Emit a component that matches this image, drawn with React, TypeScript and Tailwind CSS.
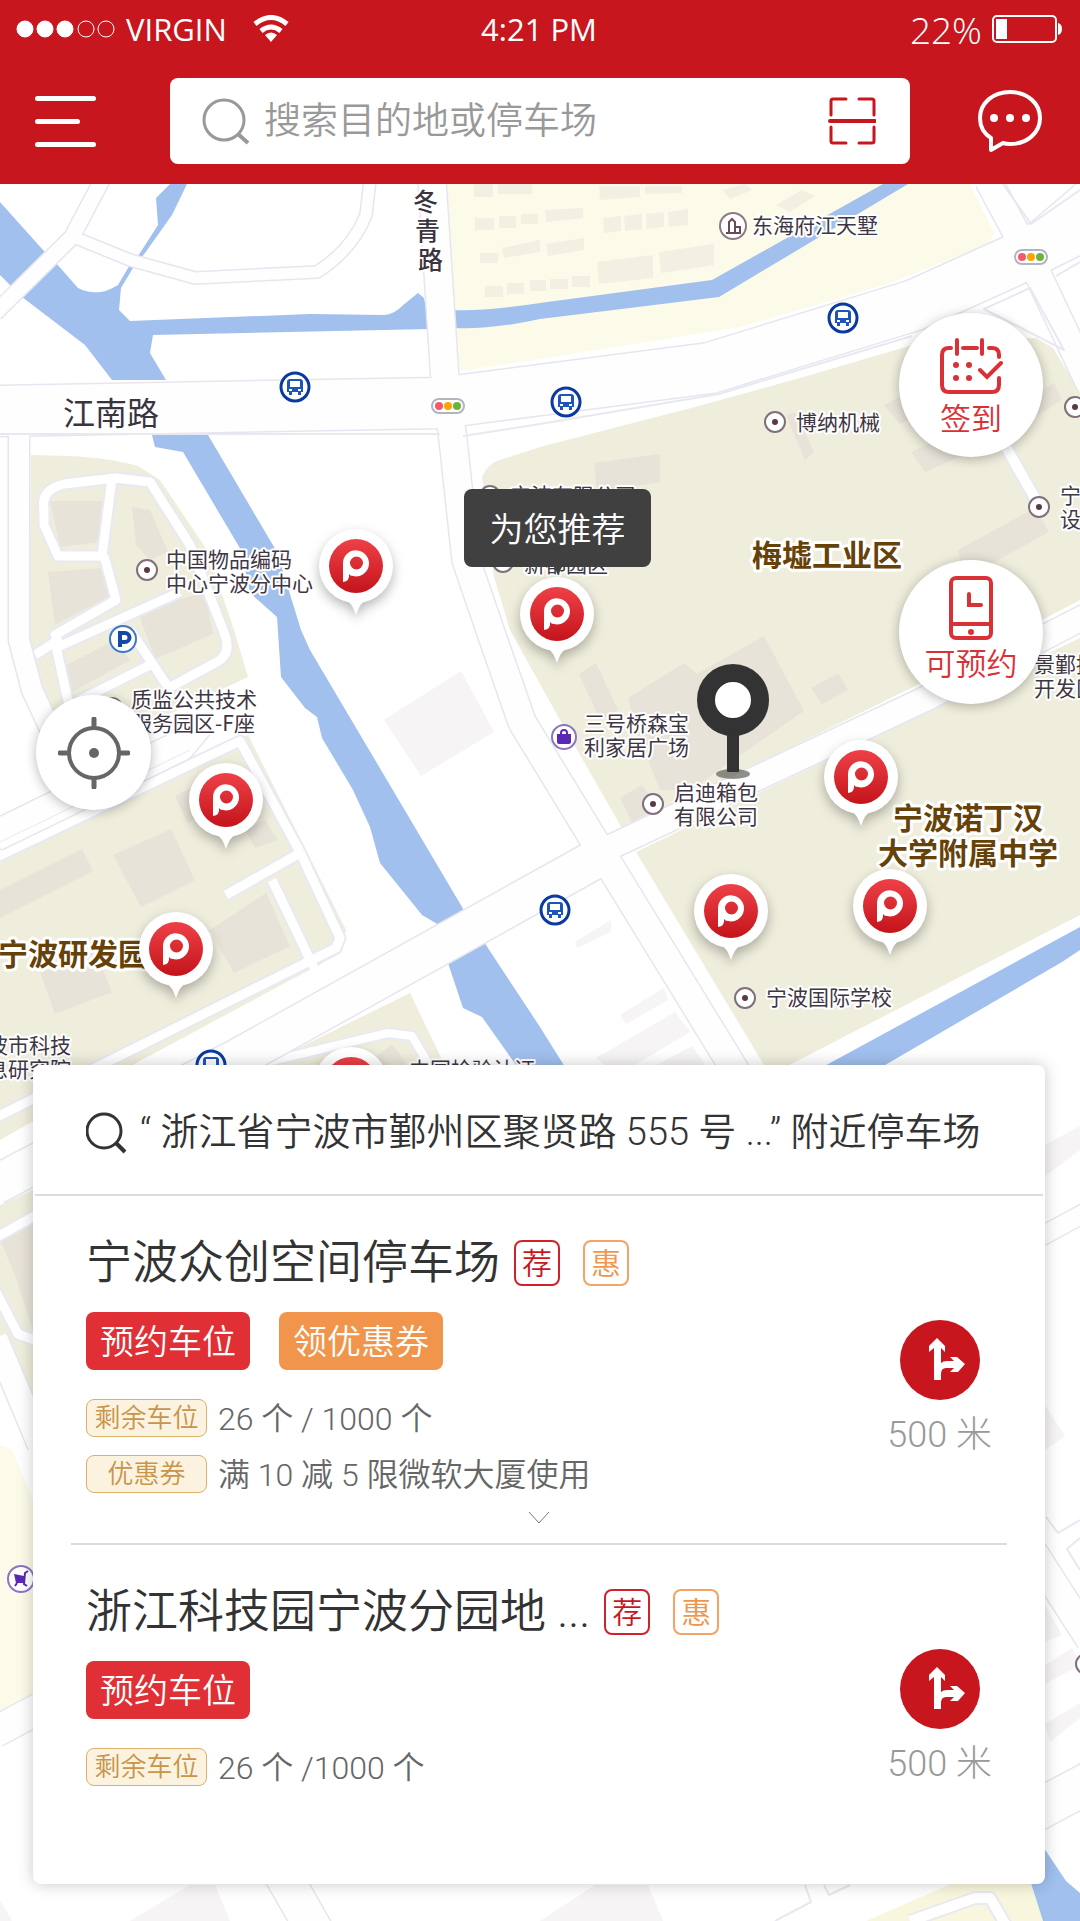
import React from "react";

type Point = { x: number; y: number };

const dots: Point[] = [
  { x: 147, y: 570 },
  { x: 775, y: 422 },
  { x: 653, y: 804 },
  { x: 745, y: 998 },
  { x: 1039, y: 507 },
  { x: 1075, y: 407 },
  { x: 1086, y: 1664 },
  { x: 112, y: 708 },
  { x: 490, y: 496 },
  { x: 503, y: 562 },
];

const buses: Point[] = [
  { x: 295, y: 387 },
  { x: 566, y: 402 },
  { x: 843, y: 318 },
  { x: 555, y: 910 },
  { x: 211, y: 1065 },
];

const lights: Point[] = [
  { x: 448, y: 406 },
  { x: 1031, y: 257 },
];

const placeLabels: [string, number, number][] = [
  ["东海府江天墅", 752, 233],
  ["博纳机械", 796, 430],
  ["中国物品编码", 166, 567],
  ["中心宁波分中心", 166, 591],
  ["质监公共技术", 131, 707],
  ["服务园区-F座", 131, 731],
  ["三号桥森宝", 584, 731],
  ["利家居广场", 584, 755],
  ["启迪箱包", 674, 800],
  ["有限公司", 674, 824],
  ["宁波国际学校", 766, 1005],
  ["宁波有限公司", 510, 503],
  ["新都园区", 524, 572],
  ["宁波", 1060, 503],
  ["设计", 1060, 527],
  ["景鄞招", 1034, 672],
  ["开发区", 1034, 696],
  ["宁波市科技", -34, 1053],
  ["信息研究院", -34, 1077],
  ["中国检验认证", 409, 1077],
];

const areaLabels: [string, number, number][] = [
  ["梅墟工业区", 752, 566],
  ["宁波诺丁汉", 893, 829],
  ["大学附属中学", 878, 864],
  ["宁波研发园", -2, 965],
];

const roads: { d: string; w: number }[] = [
  { d: "M-5 313L72 237L102 180", w: 15 },
  { d: "M76 238L130 260L195 278L317 272Q352 250 366 215L370 180", w: 11 },
  { d: "M19 420V640L32 690L60 750", w: 20 },
  { d: "M-5 836L180 746L200 722", w: 30 },
  { d: "M988 180L1032 262L1090 385", w: 26 },
  { d: "M1020 250L1090 190", w: 26 },
  { d: "M600 852L923 700L1090 614", w: 24 },
  { d: "M-5 1185L238 1058L540 890L612 850", w: 38 },
  { d: "M432 180L445 380L453 440L466 560L490 630L522 722L600 850L735 1070L1000 1500L1090 1640", w: 27 },
  { d: "M-5 411L440 403L540 390L710 368L915 305L1010 262L1090 222", w: 50 },
  { d: "M-5 1732L40 1708", w: 30 },
  { d: "M-5 1338L40 1445", w: 24 },
  { d: "M280 1870L320 1940", w: 36 },
  { d: "M1030 1814L1090 1782", w: 40 },
  { d: "M1040 1237L1090 1210", w: 18 },
];

const lanes: { d: string; w: number }[] = [
  { d: "M44 510Q40 490 64 484L115 478L150 482L190 545L225 635Q232 655 215 663L165 690", w: 9 },
  { d: "M44 506L44 525L58 556L102 556L112 478", w: 9 },
  { d: "M104 556L116 600L55 635L60 646L180 592", w: 9 },
  { d: "M35 655L55 642L70 710", w: 9 },
  { d: "M130 630L170 690M80 700L150 665", w: 9 },
  { d: "M-5 858L240 741L300 852L340 938L336 948L-5 1118", w: 9 },
  { d: "M302 852L226 895M272 880L314 968", w: 9 },
  { d: "M250 1066L388 1033L412 1036L432 1070", w: 8 },
  { d: "M40 1213L-5 1238M-5 1290L18 1334L40 1342", w: 9 },
  { d: "M1002 440L1036 500", w: 10 },
  { d: "M910 1921L975 1898L990 1898L1006 1925", w: 10 },
];

const water: string[] = [
  "M0 202L43 250L56 263L78 288Q98 298 118 285L128 268L140 253L158 225L156 198L170 184H187L172 215L145 253L133 268L121 288L119 310L130 321L310 314L385 315Q396 313 402 306L418 293L424 298L430 329L153 335L150 353L166 380H112L85 345L22 297L0 275Z",
  "M451 310Q480 312 540 303L712 280L833 212L883 184H908L719 297L540 319Q490 330 453 328Z",
  "M152 435H208L277 552L301 630L310 650L465 912L484 942L540 1027L570 1075H523L482 1017L463 1008L448 963L439 925L422 915L380 863L370 827L353 790L322 738L317 717L305 708L281 677L277 617L250 593L241 550L183 452L155 447Z",
  "M808 1075L1080 927V950L1062 962L868 1075Z",
  "M1030 1880L1044 1848L1066 1881L1080 1893V1921H1043Z",
];

const greyBlocks: string[] = [
  "M50 501H102L99 542L60 547Z",
  "M132 507L150 510L168 552L150 560L136 545Z",
  "M48 572L104 568L110 596L55 625Z",
  "M138 612L205 592L213 634L155 659Z",
  "M57 670L115 640L130 660L72 692Z",
  "M175 796L212 778L220 800L188 824Z",
  "M113 855L171 829L195 880L141 907Z",
  "M0 890L82 849L93 871L0 918Z",
  "M210 930L266 893L290 946L234 973Z",
  "M36 960L90 940L112 992L55 1014Z",
  "M245 830L265 820L278 840L255 848Z",
  "M594 463L660 454V482L597 492Z",
  "M786 415L795 412L814 452L805 460Z",
  "M884 405L930 382L940 402L900 424Z",
  "M911 452L960 430L975 450L925 472Z",
  "M1035 395L1054 383L1062 400L1038 415Z",
  "M958 550L1035 508L1049 532L980 570H962Z",
  "M579 674L596 663L618 710L600 720Z",
  "M628 698L684 663L697 674L764 636L804 711L690 790L660 790L640 740Z",
  "M811 688L838 673L848 690L822 704Z",
  "M620 798L642 785L658 808L632 822Z",
  "M365 1066L392 1044L405 1062V1066Z",
  "M0 1240L33 1222V1330L15 1275Z",
];

const faintBlocks: string[] = [
  "M384 720L461 671L494 732L421 776Z",
  "M575 942L611 920V932L577 948Z",
  "M620 1015L664 988L668 1000L626 1024Z",
  "M596 1058L675 1012L690 1032L618 1075Z",
  "M655 1066L692 1046L706 1066Z",
  "M1045 1145L1080 1126V1150L1045 1176Z",
  "M1045 1405L1065 1436L1045 1450Z",
  "M1045 1605L1062 1635L1045 1642Z",
  "M1045 1665L1072 1648L1080 1665L1045 1684Z",
  "M1045 1724L1080 1703V1718L1050 1742Z",
  "M130 1921L190 1885H215L230 1921Z",
  "M540 1921L595 1885H648L663 1921Z",
  "M0 1900L12 1921H0Z",
];

const yellowBlocks: string[] = [
  "M474 184H493V197H474ZM498 184H532V194H498Z",
  "M475 218H494V230H475ZM499 216H516V228H499ZM521 214H538V224H521Z",
  "M480 253H498V263H480ZM502 248L540 240V252L504 258Z",
  "M485 286H503V297H485ZM507 283H524V294H507ZM530 280H546V291H530Z",
  "M546 244L584 238V250L548 256Z",
  "M545 210L583 208V218L546 222Z",
  "M599 186H640V197L600 200ZM645 186H682V193L645 194Z",
  "M603 218L621 216V231L604 233ZM624 216L642 214V229L625 231ZM646 214L664 212V227L647 229ZM668 212L688 209V225L669 227Z",
  "M597 262L653 255V278L599 284ZM659 252L714 244V265L661 273Z",
  "M550 279H568V289H550ZM572 276H590V287H572Z",
  "M722 190L745 184L752 190L730 199ZM776 205L802 190L815 196L790 212Z",
];

function CityMap() {
  return (
    <svg
      aria-label="地图"
      className="absolute inset-0 h-full w-full"
      viewBox="0 184 1080 1737"
      preserveAspectRatio="xMinYMin slice"
    >
      <rect x="0" y="184" width="1080" height="1737" fill="#fff" />
      <g fill="#fcfae8">
        <path d="M444 184L453 310L460 371L540 359L740 327L884 285L988 245L994 233L970 184Z" />
        <path d="M0 1445L12 1450L33 1500V1700L0 1718Z" />
        <path d="M866 1921L960 1880H1030L1043 1921Z" fill="#f8f6dc" />
      </g>
      <g fill="#efeddc">
        <path d="M31 455L69 456Q110 458 138 466L160 480L207 550L234 630L248 677L75 758L40 700L29 650Z" />
        <path d="M0 850L248 735L306 850L346 930L341 953L138 1062L0 1140Z" />
        <path d="M258 1068L410 993L446 1068Z" />
        <path d="M0 1205L33 1190V1415L0 1340Z" />
        <path d="M482 477Q488 463 500 460L540 447L695 407L800 378L919 343L1036 338L1053 348L1080 392V600L919 684L623 830L560 720L510 630L494 577Z" />
        <path d="M636 852L1080 638V915L770 1075Z" />
      </g>
      <g fill="#f3f0e3">
        {yellowBlocks.map((d) => (
          <path key={d} d={d} />
        ))}
      </g>
      <g fill="#e7e3d8">
        {greyBlocks.map((d) => (
          <path key={d} d={d} />
        ))}
      </g>
      <g fill="#f7f4f5">
        {faintBlocks.map((d) => (
          <path key={d} d={d} />
        ))}
      </g>
      <g fill="#a1c0ee">
        {water.map((d) => (
          <path key={d} d={d} />
        ))}
      </g>
      <g fill="none" strokeLinejoin="round">
        {lanes.map((r) => (
          <path key={r.d} d={r.d} stroke="#e9e9f3" strokeWidth={r.w + 4} />
        ))}
        {lanes.map((r) => (
          <path key={r.d} d={r.d} stroke="#fff" strokeWidth={r.w} />
        ))}
        {roads.map((r) => (
          <path key={r.d} d={r.d} stroke="#e6e6f0" strokeWidth={r.w + 3} />
        ))}
        {roads.map((r) => (
          <path key={r.d} d={r.d} stroke="#fefefe" strokeWidth={r.w} />
        ))}
        <g stroke="#e8e8f0" strokeWidth="2">
          <path d="M0 434H440M463 436L540 424L719 394L912 336" />
          <path d="M984 309L1030 288L1064 350ZM1056 276L1080 262M1003 184L1031 224L1080 190" />
          <path d="M1046 1517L1058 1533L1080 1520M1080 1538L1067 1549L1080 1570M805 1885L811 1902L775 1921M824 1885L829 1895L850 1885" />
          <path d="M0 842L190 750" strokeWidth="1" />
        </g>
      </g>

      <g fontFamily="'Noto Sans CJK SC', sans-serif" paintOrder="stroke" stroke="#fff" strokeLinejoin="round">
        <g fill="#3f3644" fontSize="21" fontWeight="400" strokeWidth="4">
          {placeLabels.map(([text, x, y]) => (
            <text key={text + y} x={x} y={y}>
              {text}
            </text>
          ))}
        </g>
        <g fill="#664208" fontSize="30" fontWeight="700" strokeWidth="6">
          {areaLabels.map(([text, x, y]) => (
            <text key={text} x={x} y={y}>
              {text}
            </text>
          ))}
        </g>
        <g fill="#3a3440">
          <text x="63" y="425" fontSize="32" strokeWidth="4">
            江南路
          </text>
          <g fontSize="25" strokeWidth="4" fontWeight="500">
            <text x="413" y="211">
              冬
            </text>
            <text x="415" y="240">
              青
            </text>
            <text x="418" y="269">
              路
            </text>
          </g>
        </g>
      </g>

      {dots.map((p) => (
        <g key={`${p.x}-${p.y}`}>
          <circle cx={p.x} cy={p.y} r="10" fill="#fff" stroke="#806f7c" strokeWidth="2" />
          <circle cx={p.x} cy={p.y} r="3" fill="#5a3a48" />
        </g>
      ))}
      {buses.map((p) => (
        <g key={`${p.x}-${p.y}`} transform={`translate(${p.x} ${p.y})`}>
          <circle r="14" fill="#fff" stroke="#0b3a9f" strokeWidth="3" />
          <path
            fill="#1d55bd"
            fillRule="evenodd"
            d="M-5 -8H5Q8 -8 8 -5V5H6V8H3V5H-3V8H-6V5H-8V-5Q-8 -8 -5 -8ZM-5 -6V0H5V-6ZM-6 2V4H-3V2ZM3 2V4H6V2Z"
          />
        </g>
      ))}
      {lights.map((p) => (
        <g key={`${p.x}-${p.y}`} transform={`translate(${p.x} ${p.y})`}>
          <rect x="-16" y="-7" width="32" height="14" rx="7" fill="#fff" stroke="#b4b4c0" strokeWidth="2" />
          <circle cx="-9" r="4" fill="#f4586c" />
          <circle r="4" fill="#fca400" />
          <circle cx="9" r="4" fill="#6cb43c" />
        </g>
      ))}
      <g transform="translate(123 639)">
        <circle r="13" fill="#fff" stroke="#3a78c8" strokeWidth="2" />
        <path d="M-3 8V-6H2A4 4 0 0 1 2 3H-3" fill="none" stroke="#1348a8" strokeWidth="4" />
      </g>
      <g transform="translate(733 226)">
        <circle r="13" fill="#fff" stroke="#8a7a86" strokeWidth="2" />
        <path d="M-7 7H7V1H2M-4 7V-4L-1 -7L2 -4V7" fill="none" stroke="#6a4a58" strokeWidth="2" />
      </g>
      <g transform="translate(564 737)">
        <circle r="12" fill="#fff" stroke="#8a74c4" strokeWidth="2" />
        <path d="M-7 -3H7V5Q7 7 5 7H-5Q-7 7 -7 5Z" fill="#5a28b4" />
        <path d="M-3 -2V-4Q-3 -7 0 -7T3 -4V-2" fill="none" stroke="#5a28b4" strokeWidth="2" />
      </g>
      <g transform="translate(21 1579)">
        <circle r="13" fill="#fff" stroke="#8a74c4" strokeWidth="2" />
        <path d="M-7 -5L-5 4H3V-3Z" fill="#5a28b4" />
        <path d="M7 -8L4 -6L3 5L6 7M-6 7L-4 4" fill="none" stroke="#5a28b4" strokeWidth="2" />
      </g>

      <g>
        <ellipse cx="733" cy="774" rx="17" ry="5" fill="#55534c" opacity="0.65" />
        <rect x="727" y="728" width="12" height="44" rx="1" fill="#333" />
        <circle cx="733" cy="700" r="27" fill="#fff" stroke="#333" strokeWidth="18" />
      </g>
    </svg>
  );
}

function ParkingPin({ className }: { className: string }) {
  return (
    <button type="button" aria-label="停车场" className={"absolute h-[86px] w-[74px] " + className}>
      <svg viewBox="-37 -37 74 86" className="h-full w-full overflow-visible drop-shadow-[0_5px_6px_rgba(0,0,0,0.28)]">
        <defs>
          <linearGradient id="pinRed" x1="0" y1="0" x2="0" y2="1">
            <stop offset="0" stopColor="#ee4147" />
            <stop offset="1" stopColor="#c4141b" />
          </linearGradient>
        </defs>
        <path d="M-9 35Q-4 37 0 49Q4 37 9 35Z" fill="#fff" />
        <circle r="37" fill="#fff" />
        <circle r="27" fill="url(#pinRed)" />
        <path
          fill="#fff"
          fillRule="evenodd"
          d="M-13 -3A13 13 0 1 1 -3 10Q-6 10 -7 8Q-6 15 -13 16ZM-6 -3A6 6 0 1 0 7 -3A6 6 0 1 0 -6 -3Z"
        />
      </svg>
    </button>
  );
}

function StatusBar() {
  return (
    <div className="grid h-[58px] grid-cols-3 items-center pr-[18px] pl-4 font-['Open_Sans',sans-serif] text-[31px] leading-none text-white">
      <div className="flex items-center">
        <svg viewBox="0 0 100 18" className="h-[18px] w-[100px]" fill="#fff" stroke="#fff" strokeWidth="1">
          <circle cx="9" cy="9" r="8" />
          <circle cx="29" cy="9" r="8" />
          <circle cx="49" cy="9" r="8" />
          <circle cx="70" cy="9" r="8" fill="none" />
          <circle cx="90" cy="9" r="8" fill="none" />
        </svg>
        <span className="ml-2.5">VIRGIN</span>
        <svg viewBox="0 0 36 28" className="ml-[26px] h-7 w-9" fill="none" stroke="#fff" strokeWidth="5">
          <path d="M2 9Q18 -4 34 9" />
          <path d="M8 16Q18 8 28 16" />
          <path d="M18 27L12 20Q18 15 24 20Z" fill="#fff" stroke="none" />
        </svg>
      </div>
      <div className="text-center font-medium">4:21 PM</div>
      <div className="flex items-center justify-end gap-2.5">
        <span className="text-[37px] font-light">22%</span>
        <svg viewBox="0 0 70 30" className="h-[30px] w-[70px]" fill="none" stroke="#fff">
          <rect x="1" y="2" width="63" height="26" rx="4" strokeWidth="2" />
          <rect x="4" y="5" width="11" height="20" fill="#fff" stroke="none" />
          <path d="M66 9Q70 10 70 15T66 21Z" fill="#fff" stroke="none" />
        </svg>
      </div>
    </div>
  );
}

function Header() {
  return (
    <header className="bg-[#c7161d]">
      <StatusBar />
      <div className="flex h-[126px] items-start pt-5 pr-[37px] pl-[35px]">
        <button type="button" aria-label="菜单" className="flex h-[86px] w-[61px] flex-col justify-center gap-[18px]">
          <span className="h-[5px] w-full rounded-sm bg-white" />
          <span className="h-[5px] w-[45px] rounded-sm bg-white" />
          <span className="h-[5px] w-full rounded-sm bg-white" />
        </button>
        <label className="mr-[67px] ml-[74px] flex h-[86px] min-w-0 flex-1 items-center rounded-lg bg-white pr-[34px] pl-8">
          <svg viewBox="0 0 48 48" className="h-12 w-12 shrink-0" fill="none" stroke="#999" strokeWidth="3">
            <circle cx="22" cy="23" r="20" />
            <path d="M36 37L46 46" strokeWidth="4" />
          </svg>
          <input
            type="text"
            aria-label="搜索"
            placeholder="搜索目的地或停车场"
            className="ml-3.5 h-full min-w-0 flex-1 text-[37px] font-[350] outline-none placeholder:text-[#999]"
          />
          <button type="button" aria-label="扫一扫" className="shrink-0">
            <svg viewBox="0 0 48 48" className="h-12 w-12" fill="none" stroke="#c7161d" strokeWidth="3" strokeLinecap="round">
              <path d="M18 2H5Q3 2 3 4V18M31 2H44Q46 2 46 4V18M3 30V44Q3 46 5 46H18M46 30V44Q46 46 44 46H31" />
              <path d="M2 24H47" strokeWidth="4" />
            </svg>
          </button>
        </label>
        <button type="button" aria-label="消息" className="flex h-[86px] items-center">
          <svg viewBox="0 0 66 66" className="h-[66px] w-[66px]" fill="none" stroke="#fff" strokeWidth="4" strokeLinejoin="round">
            <path d="M14 50C6 45 3 38 3 30C3 15 16 4 33 4S63 15 63 30S50 56 33 56Q29 56 26 55L14 62Z" />
            <g fill="#fff" stroke="none">
              <circle cx="17" cy="30" r="4" />
              <circle cx="33" cy="30" r="4" />
              <circle cx="49" cy="30" r="4" />
            </g>
          </svg>
        </button>
      </div>
    </header>
  );
}

const roundShadow = "shadow-[0_2px_12px_rgba(0,0,0,0.28)]";

function MapControls() {
  return (
    <>
      <button
        type="button"
        className={
          "absolute top-[129px] right-[37px] flex h-36 w-36 flex-col items-center rounded-full bg-white pt-[24px] text-[31px] leading-[50px] font-[350] text-[#d93236] " +
          roundShadow
        }
      >
        <svg viewBox="0 0 64 58" className="h-[58px] w-16" fill="none" stroke="#d93236" strokeWidth="4" strokeLinecap="round">
          <path d="M12 11H10Q3 11 3 18V48Q3 55 10 55H53Q60 55 60 48V41M24 11H38M50 11H53Q60 11 60 18V20" />
          <path d="M18 3V17M43 3V17M41 33L48 40L62 26" />
          <g fill="#d93236" stroke="none">
            <circle cx="17" cy="28" r="3" />
            <circle cx="30" cy="28" r="3" />
            <circle cx="17" cy="41" r="3" />
            <circle cx="30" cy="41" r="3" />
          </g>
        </svg>
        签到
      </button>
      <button
        type="button"
        className={
          "absolute top-[376px] right-[37px] flex h-36 w-36 flex-col items-center rounded-full bg-white pt-[16px] text-[31px] leading-[50px] font-[350] text-[#d93236] " +
          roundShadow
        }
      >
        <svg viewBox="0 0 44 64" className="h-16 w-11" fill="none" stroke="#d93236" strokeWidth="4">
          <rect x="2" y="2" width="40" height="60" rx="5" />
          <path d="M2 48H42" />
          <path d="M20 18V29H32" strokeLinecap="round" />
          <circle cx="22" cy="56" r="3" fill="#d93236" stroke="none" />
        </svg>
        可预约
      </button>
      <button
        type="button"
        aria-label="定位"
        className={
          "absolute top-[511px] left-9 flex h-[115px] w-[115px] items-center justify-center rounded-full bg-white " + roundShadow
        }
      >
        <svg viewBox="-36 -36 72 72" className="h-[72px] w-[72px]" fill="none" stroke="#666" strokeWidth="4" strokeLinecap="round">
          <circle r="25" />
          <path strokeWidth="5" d="M0 -34V-26M0 34V26M-34 0H-26M34 0H26" />
          <circle r="5" fill="#666" stroke="none" />
        </svg>
      </button>
    </>
  );
}

type Lot = {
  name: string;
  actions: { label: string; className: string }[];
  info: { tag: string; text: string }[];
  distance: string;
  expandable: boolean;
  navClassName: string;
};

const lots: Lot[] = [
  {
    name: "宁波众创空间停车场",
    actions: [
      { label: "预约车位", className: "bg-[#e02f35]" },
      { label: "领优惠券", className: "bg-[#f0954b]" },
    ],
    info: [
      { tag: "剩余车位", text: "26 个 / 1000 个" },
      { tag: "优惠券", text: "满 10 减 5 限微软大厦使用" },
    ],
    distance: "500 米",
    expandable: true,
    navClassName: "pt-20",
  },
  {
    name: "浙江科技园宁波分园地 ...",
    actions: [{ label: "预约车位", className: "bg-[#e02f35]" }],
    info: [{ tag: "剩余车位", text: "26 个 /1000 个" }],
    distance: "500 米",
    expandable: false,
    navClassName: "pt-15",
  },
];

function LotItem({ lot }: { lot: Lot }) {
  return (
    <li className="mx-[38px] pt-[44px] not-first:border-t-2 not-first:border-[#dcdcdc]">
      <div className="flex justify-between pr-[15px] pl-[15px]">
        <div>
          <div className="flex h-[46px] items-start">
            <h2 className="text-[46px] leading-[44px] font-[350] whitespace-pre text-[#333]">{lot.name}</h2>
            <span className="ml-3.5 flex h-[46px] w-[46px] items-center justify-center rounded-lg border-2 border-[#d0222b] pt-0.5 text-[30px] leading-none font-[350] text-[#c7161d]">
              荐
            </span>
            <span className="ml-[23px] flex h-[46px] w-[46px] items-center justify-center rounded-lg border-2 border-[#f3a364] pt-0.5 text-[30px] leading-none font-[350] text-[#f0954b]">
              惠
            </span>
          </div>
          <div className="mt-[26px] flex gap-[29px]">
            {lot.actions.map((a) => (
              <button
                key={a.label}
                type="button"
                className={"h-[58px] w-[164px] rounded-lg text-[34px] leading-[60px] font-[350] text-white " + a.className}
              >
                {a.label}
              </button>
            ))}
          </div>
          <div className="mt-[29px] flex flex-col gap-[18px]">
            {lot.info.map((row) => (
              <div key={row.tag} className="flex h-[38px] items-start gap-[11px]">
                <span className="h-[38px] w-[121px] rounded-lg border border-[#dbb06a] bg-[#fbf3e0] text-center text-[26px] leading-[37px] font-[350] text-[#c8954a]">
                  {row.tag}
                </span>
                <span className="text-[32px] leading-[40px] font-[350] text-[#666]">{row.text}</span>
              </div>
            ))}
          </div>
        </div>
        <div className={lot.navClassName}>
          <a href="#navigate" className="flex flex-col items-center text-[36px] leading-[54px] font-light text-[#999]">
            <svg viewBox="0 0 80 80" className="mb-2 h-20 w-20">
              <circle cx="40" cy="40" r="40" fill="#c7161d" />
              <path
                fill="#fff"
                d="M37 18L45 26V32L41 28V43Q43 41 47 41H54L50 37H57L65 44L58 52H50L54 48H46Q41 48 41 54V60H34V28L29 32V26Z"
              />
            </svg>
            {lot.distance}
          </a>
        </div>
      </div>
      {lot.expandable ? (
        <button type="button" aria-label="展开" className="mx-auto flex h-[50px] w-20 items-center justify-center">
          <svg viewBox="0 0 22 14" className="h-3.5 w-[22px]" fill="none" stroke="#777" strokeWidth="1">
            <path d="M1 1L11 12L21 1" />
          </svg>
        </button>
      ) : null}
    </li>
  );
}

export default function App() {
  return (
    <div className="flex min-h-screen flex-col bg-white font-[Roboto,'Noto_Sans_CJK_SC',sans-serif]">
      <Header />
      <main className="relative flex-1 overflow-hidden">
        <CityMap />
        <ParkingPin className="top-[345px] left-[319px]" />
        <ParkingPin className="top-[393px] left-[520px]" />
        <ParkingPin className="top-[579px] left-[189px]" />
        <ParkingPin className="top-[728px] left-[139px]" />
        <ParkingPin className="top-[556px] left-[824px]" />
        <ParkingPin className="top-[690px] left-[694px]" />
        <ParkingPin className="top-[685px] left-[853px]" />
        <ParkingPin className="top-[863px] left-[314px]" />
        <div
          role="tooltip"
          className="absolute top-[305px] left-[464px] flex h-[78px] w-[187px] items-center justify-center rounded-lg bg-[#404040] pt-1 text-[34px] font-[350] text-white after:absolute after:top-full after:border-x-4 after:border-t-8 after:border-x-transparent after:border-t-[#404040]"
        >
          为您推荐
        </div>
        <MapControls />

        <section className="relative mr-[35px] ml-[33px] mt-[881px] mb-9 rounded-lg bg-white pb-[93px] shadow-[0_0_16px_rgba(0,0,0,0.22)]">
          <div className="mx-0.5 flex h-[131px] items-center border-b-2 border-[#dcdcdc] pt-1.5 pl-[51px] text-[38px] font-[350] text-[#333]">
            <svg viewBox="0 0 42 42" className="h-[42px] w-[42px] shrink-0" fill="none" stroke="#333" strokeWidth="3">
              <circle cx="18" cy="19" r="17" />
              <path d="M30 31L39 40" strokeWidth="4" />
            </svg>
            <h1 className="ml-3 whitespace-nowrap">“ 浙江省宁波市鄞州区聚贤路 555 号 ...” 附近停车场</h1>
          </div>
          <ul>
            {lots.map((lot) => (
              <LotItem key={lot.name} lot={lot} />
            ))}
          </ul>
        </section>
      </main>
    </div>
  );
}
